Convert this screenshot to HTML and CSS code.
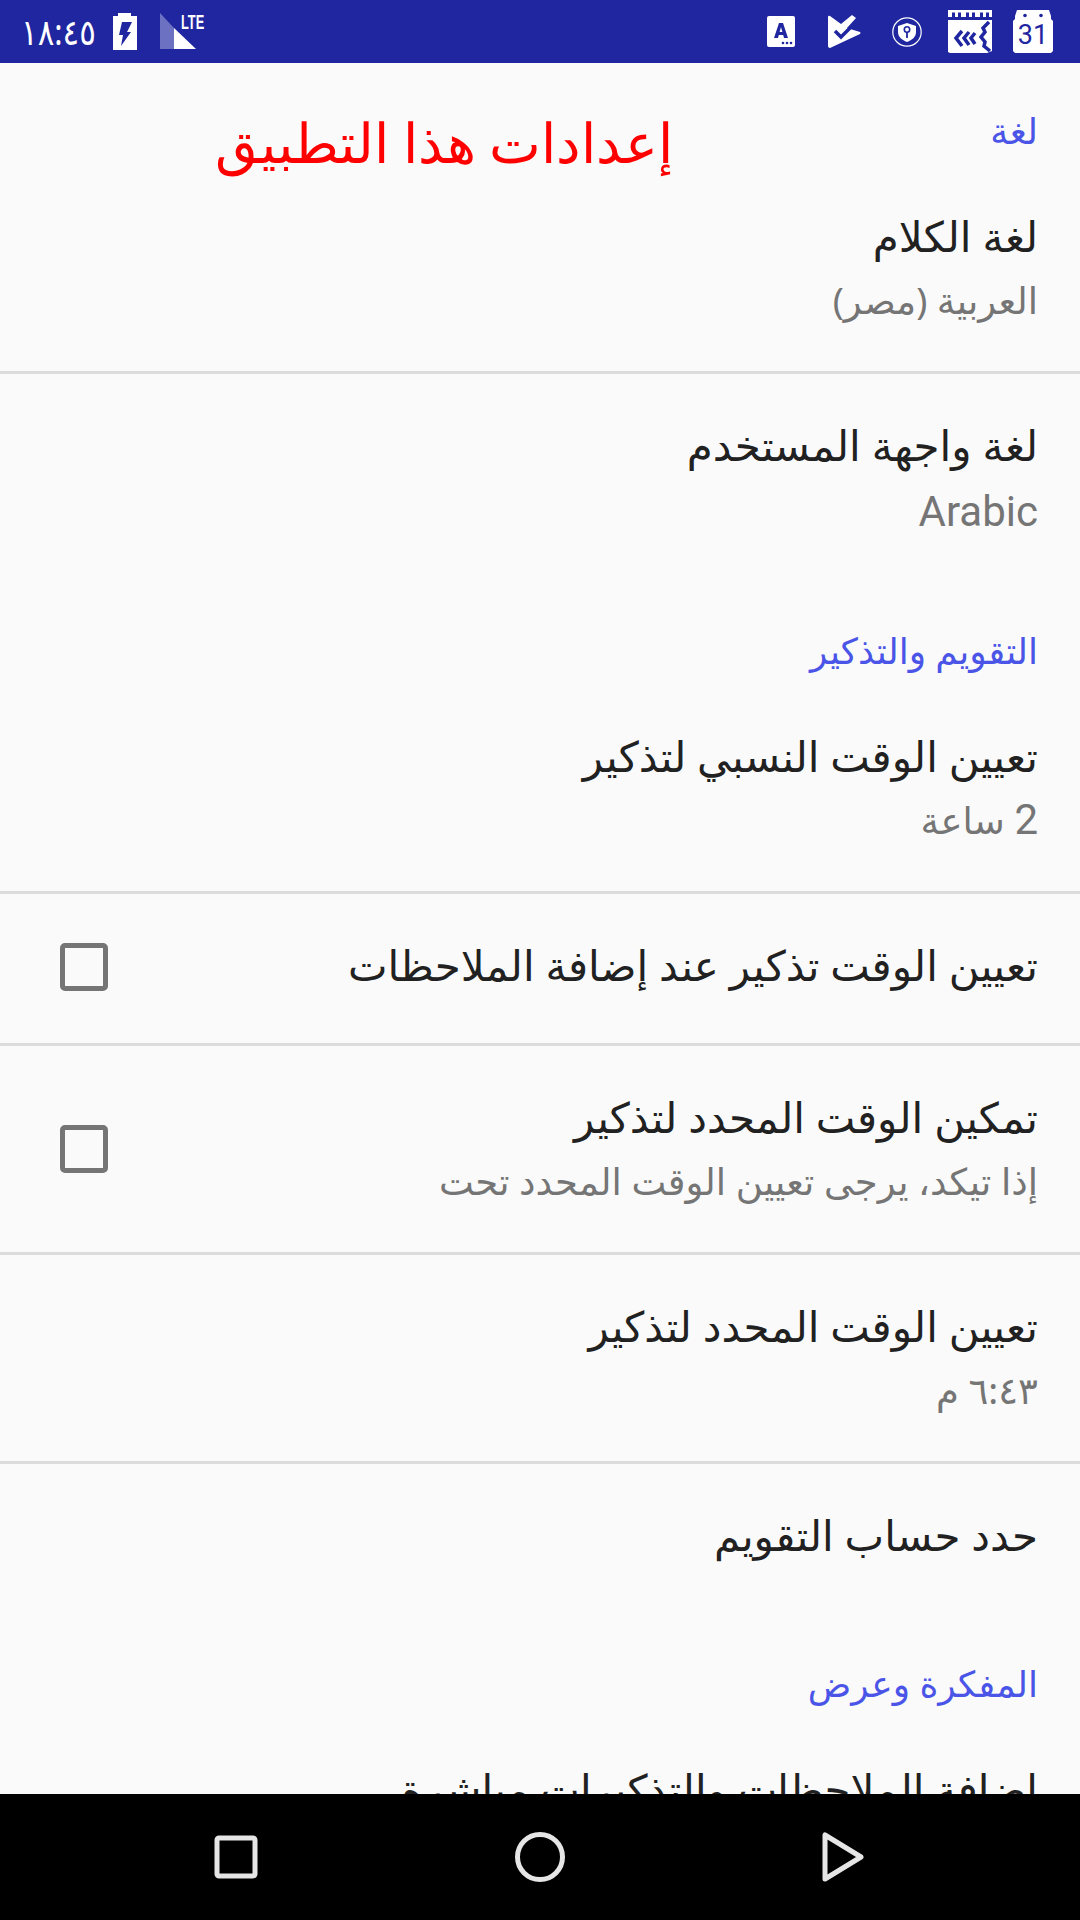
FILE: index.html
```html
<!DOCTYPE html>
<html lang="ar" dir="rtl">
<head>
<meta charset="utf-8">
<title>إعدادات</title>
<link rel="stylesheet" href="styles.css">
</head>
<body>
<div class="screen">
  <header class="status" dir="ltr">
    <div class="status-left">
      <span class="clock">١٨:٤٥</span>
      <svg class="ic-battery" viewBox="0 0 24 37"><path fill="#fff" d="M5 0h13v3h6v34H0V3h5z"/><path fill="#1f26a0" d="M9 9h10l-5 10h4L8 33l2-11H6z"/></svg>
      <div class="signal">
        <svg class="ic-signal" viewBox="0 0 36 36"><path fill="#fff" fill-opacity=".35" d="M0 0l14 15v21H0z"/><path fill="#fff" d="M14 15l22 21H14z"/></svg>
        <span class="lte">LTE</span>
      </div>
    </div>
    <div class="status-right">
      <svg class="ic-a" viewBox="0 0 28 31"><rect width="28" height="31" rx="2" fill="#fff"/><path fill="#1f26a0" d="M7 22L12 7h4l5 15h-4l-.8-3h-4.400l-.8 3zm5.600-6h2.800L14 11z"/><circle cx="16" cy="27" r="1.300" fill="#1f26a0"/><circle cx="20" cy="27" r="1.300" fill="#1f26a0"/><circle cx="24" cy="27" r="1.300" fill="#1f26a0"/></svg>
      <svg class="ic-tasks" viewBox="0 0 33 33"><path fill="#fff" d="M0 2Q0 0 2 1l11 8L24 0l4 3-9 10 13 4q1 1 0 2L2 33q-2 0-2-2z"/><path fill="none" stroke="#1f26a0" stroke-width="3.500" d="M7 16l6 6L27 8"/></svg>
      <svg class="ic-shield" viewBox="0 0 30 30"><circle cx="15" cy="15" r="14.200" fill="none" stroke="#fff" stroke-width="1.200"/><path fill="#fff" d="M15 6l9 3v6c0 5-4 8-9 10-5-2-9-5-9-10V9z"/><circle cx="15" cy="12.500" r="2.700" fill="none" stroke="#1f26a0" stroke-width="1.600"/><path stroke="#1f26a0" stroke-width="1.800" d="M15 15v6"/></svg>
      <svg class="ic-week" viewBox="0 0 44 43"><path fill="#fff" d="M0 0h44v7H0zM0 10h44v31l-5 2H2l-2-1z"/><path fill="#1f26a0" d="M4 2.500h3V7H4zM10 2.500h3V7h-3zM18 2.500h3V7h-3zM24 2.500h3V7h-3zM32 2.500h3V7h-3zM38 2.500h3V7h-3z"/><path fill="none" stroke="#1f26a0" stroke-width="3.500" d="M14 21l-6 7 6 8M21 22l-5 6 5 7M27 23l-4 5 4 6M41 12l-6 6 2 4-4 5 4 5-1 4 6 5"/></svg>
      <svg class="ic-cal" viewBox="0 0 40 43"><path fill="#fff" d="M4 0h32l2 6v3l2 2v30l-2 2H2l-2-2V11l2-2V6z"/><circle cx="12" cy="5.500" r="1.800" fill="#1f26a0"/><circle cx="28" cy="5.500" r="1.800" fill="#1f26a0"/><text class="cal-num" x="20" y="34" text-anchor="middle">31</text></svg>
    </div>
  </header>

  <main class="content">
    <h2 class="section">لغة</h2>
    <div class="annotation">إعدادات هذا التطبيق</div>
    <div class="row line">
      <div class="text"><div class="t">لغة الكلام</div><div class="s">العربية (مصر)</div></div>
    </div>
    <div class="row">
      <div class="text"><div class="t">لغة واجهة المستخدم</div><div class="s big">Arabic</div></div>
    </div>
    <h2 class="section">التقويم والتذكير</h2>
    <div class="row line">
      <div class="text"><div class="t">تعيين الوقت النسبي لتذكير</div><div class="s"><span class="num">2</span> ساعة</div></div>
    </div>
    <div class="row one line">
      <div class="text"><div class="t">تعيين الوقت تذكير عند إضافة الملاحظات</div></div>
      <span class="check"></span>
    </div>
    <div class="row line">
      <div class="text"><div class="t">تمكين الوقت المحدد لتذكير</div><div class="s">إذا تيكد، يرجى تعيين الوقت المحدد تحت</div></div>
      <span class="check"></span>
    </div>
    <div class="row line">
      <div class="text"><div class="t">تعيين الوقت المحدد لتذكير</div><div class="s">٦:٤٣ م</div></div>
    </div>
    <div class="row one">
      <div class="text"><div class="t">حدد حساب التقويم</div></div>
    </div>
    <h2 class="section">المفكرة وعرض</h2>
    <div class="row one">
      <div class="text"><div class="t">إضافة الملاحظات والتذكيرات مباشرة</div></div>
    </div>
  </main>

  <nav class="navbar">
    <svg class="nav-i" viewBox="0 0 50 50"><rect x="6" y="6" width="38" height="38" rx="2" fill="none" stroke="#e6e6e6" stroke-width="5"/></svg>
    <svg class="nav-i" viewBox="0 0 50 50"><circle cx="25" cy="25" r="22.500" fill="none" stroke="#e6e6e6" stroke-width="5"/></svg>
    <svg class="nav-i" viewBox="0 0 50 50"><path d="M6 3v44l36-22z" fill="none" stroke="#e6e6e6" stroke-width="5" stroke-linejoin="round"/></svg>
  </nav>
</div>
</body>
</html>
```
FILE: styles.css
```css
* { box-sizing: border-box; }
html, body { margin: 0; padding: 0; }
body { background: #fafafa; font-family: "Noto Sans", "DejaVu Sans", sans-serif; }
.screen { width: 1080px; height: 1920px; display: flex; flex-direction: column; overflow: hidden; }

.status { height: 63px; flex: none; background: #1f26a0; display: flex; justify-content: space-between; align-items: center; color: #fff; padding: 0 27px 0 21px; }
.status-left, .status-right { display: flex; align-items: center; }
.clock { font-size: 36px; line-height: 1; width: 92px; transform: scaleX(.86); transform-origin: left; white-space: nowrap; }
.ic-battery { width: 24px; height: 37px; }
.signal { position: relative; width: 60px; height: 37px; margin-left: 23px; }
.ic-signal { width: 36px; height: 36px; display: block; }
.lte { position: absolute; left: 21px; top: 0; font: bold 20px/18px "Liberation Sans", sans-serif; transform: scaleX(.64); transform-origin: left; }
.ic-a { width: 28px; height: 31px; }
.ic-tasks { width: 33px; height: 33px; margin-left: 33px; }
.ic-shield { width: 30px; height: 30px; margin-left: 31px; }
.ic-week { width: 44px; height: 43px; margin-left: 26px; }
.ic-cal { width: 40px; height: 43px; margin-left: 21px; }
.cal-num { font: 400 27px Roboto, sans-serif; fill: #1f26a0; }

.content { flex: 1; min-height: 0; overflow: hidden; position: relative; background: #fafafa; }
.section { margin: 0; height: 102px; padding: 43px 42px 0; font-weight: 400; font-size: 36px; line-height: 50px; color: #4a55e8; }
.annotation { position: absolute; top: 44px; left: 214px; width: 460px; text-align: center; color: #f00; font: 55px/76px "Liberation Serif", "DejaVu Serif", serif; white-space: nowrap; }

.row { display: flex; align-items: center; justify-content: space-between; padding: 43px 42px 46px 60px; border-bottom: 3px solid transparent; }
.row.one { padding-bottom: 50px; }
.line { border-bottom-color: #dcdcdc; }
.text { flex: 1; min-width: 0; }
.t { font-size: 42px; line-height: 56px; color: #212121; white-space: nowrap; }
.s { font-size: 37px; line-height: 50px; color: #757575; margin-top: 11px; white-space: nowrap; }
.s.big { margin-top: 14px; margin-bottom: -3px; }
.s.big, .num { font-family: Roboto, sans-serif; font-size: 42px; }
.check { width: 48px; height: 48px; margin-top: 3px; border: 5px solid #757575; border-radius: 5px; flex: none; }

.navbar { height: 126px; flex: none; background: #000; display: flex; justify-content: center; gap: 254px; align-items: center; direction: ltr; }
.nav-i { width: 50px; height: 50px; }
```
